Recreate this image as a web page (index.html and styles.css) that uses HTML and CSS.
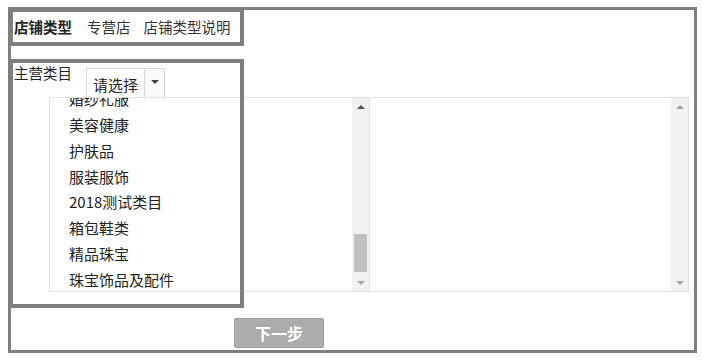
FILE: index.html
```html
<!DOCTYPE html>
<html lang="zh-CN">
<head>
<meta charset="utf-8">
<title>店铺类型</title>
<link rel="stylesheet" href="styles.css">
</head>
<body>
<div class="frame">
  <div class="shop-type">
    <span class="label-strong">店铺类型</span>
    <span class="type-value">专营店</span>
    <span class="type-help">店铺类型说明</span>
  </div>
  <div class="category-row">
    <span class="category-label">主营类目</span>
    <div class="select">
      <span class="select-text">请选择</span>
      <span class="select-arrow"><span class="tri-down dark"></span></span>
    </div>
  </div>
  <div class="panels">
    <div class="panel panel-left">
      <div class="list-viewport">
        <ul class="list">
          <li class="cut">婚纱礼服</li>
          <li>美容健康</li>
          <li>护肤品</li>
          <li>服装服饰</li>
          <li>2018测试类目</li>
          <li>箱包鞋类</li>
          <li>精品珠宝</li>
          <li>珠宝饰品及配件</li>
        </ul>
      </div>
      <div class="scrollbar">
        <span class="sb-btn"><span class="tri-up dark"></span></span>
        <span class="sb-track"><span class="sb-thumb"></span></span>
        <span class="sb-btn"><span class="tri-down light"></span></span>
      </div>
    </div>
    <div class="panel panel-right">
      <div class="list-viewport"></div>
      <div class="scrollbar">
        <span class="sb-btn"><span class="tri-up light"></span></span>
        <span class="sb-track"></span>
        <span class="sb-btn"><span class="tri-down light"></span></span>
      </div>
    </div>
  </div>
  <div class="actions">
    <button class="next-btn" type="button">下一步</button>
  </div>
</div>
<div class="mark mark-type"></div>
<div class="mark mark-category"></div>
</body>
</html>
```
FILE: styles.css
```css
html, body {
  margin: 0;
  padding: 0;
  background: #ffffff;
}
body {
  font-family: "Noto Sans CJK SC", "Noto Sans", sans-serif;
  color: #333333;
  width: 703px;
  height: 360px;
  overflow: hidden;
  position: relative;
}
.frame {
  box-sizing: border-box;
  width: 689px;
  height: 346px;
  margin: 7px 0 0 8px;
  border: 3px solid #7f7f7f;
  display: flex;
  flex-direction: column;
}
.shop-type {
  margin-top: 7px;
  padding-left: 3px;
  display: flex;
  font-size: 14.5px;
  line-height: 20px;
  white-space: nowrap;
}
.label-strong {
  font-weight: bold;
  color: #222;
}
.type-value {
  margin-left: 15px;
}
.type-help {
  margin-left: 13px;
}
.category-row {
  margin-top: 26px;
  padding-left: 3px;
  display: flex;
  align-items: flex-start;
  height: 34px;
}
.category-label {
  font-size: 14.5px;
  line-height: 20px;
  color: #222;
}
.select {
  margin-top: 5px;
  margin-left: 14px;
  box-sizing: border-box;
  height: 29px;
  display: flex;
  border: 1px solid #d6d6d6;
  border-bottom: none;
  background: #fff;
}
.select-text {
  padding: 7px 6px 0 6px;
  font-size: 15px;
  line-height: 18px;
  color: #222;
  border-right: 1px solid #d6d6d6;
}
.select-arrow {
  width: 19px;
  display: flex;
  justify-content: center;
  padding-top: 11px;
  box-sizing: border-box;
  background: #fafafa;
}
.tri-down, .tri-up {
  width: 0;
  height: 0;
  border-left: 4px solid transparent;
  border-right: 4px solid transparent;
}
.tri-down.dark { border-top: 4px solid #444; }
.tri-down.light { border-top: 4px solid #a3a3a3; }
.tri-up.dark { border-bottom: 4px solid #505050; }
.tri-up.light { border-bottom: 4px solid #a3a3a3; }
.panels {
  margin-left: 38px;
  margin-right: 5px;
  height: 195px;
  display: flex;
}
.panel {
  box-sizing: border-box;
  height: 195px;
  display: flex;
  border: 1px solid #e3e3e3;
  background: #fff;
}
.panel-left {
  width: 321px;
}
.panel-right {
  flex: 1;
  border-left: none;
}
.list-viewport {
  flex: 1;
  overflow: hidden;
}
.list {
  list-style: none;
  margin: 0;
  padding: 0 0 0 19px;
  font-size: 15px;
  line-height: 25.8px;
  color: #222;
}
.list li {
  white-space: nowrap;
}
.list li.cut {
  height: 14px;
  line-height: 1px;
  overflow: hidden;
}
.scrollbar {
  width: 17px;
  background: #f1f1f1;
  display: flex;
  flex-direction: column;
}
.sb-btn {
  height: 17px;
  display: flex;
  align-items: center;
  justify-content: center;
}
.sb-track {
  flex: 1;
  display: flex;
  flex-direction: column;
  justify-content: flex-end;
  padding: 0 2px;
}
.sb-thumb {
  height: 38px;
  background: #c1c1c1;
  margin-bottom: 2px;
}
.actions {
  margin-top: 26px;
  padding-left: 223px;
  display: flex;
}
.next-btn {
  box-sizing: border-box;
  width: 90px;
  height: 30px;
  padding: 0;
  border: 1px solid #9a9a9a;
  border-radius: 2px;
  background: #acacac;
  color: #ffffff;
  font-family: "Noto Sans CJK SC", sans-serif;
  font-size: 16px;
  font-weight: bold;
  line-height: 28px;
}
.mark {
  position: absolute;
  box-sizing: border-box;
  border: 4px solid #7f7f7f;
  pointer-events: none;
}
.mark-type {
  left: 9px;
  top: 8px;
  width: 235px;
  height: 38px;
}
.mark-category {
  left: 9px;
  top: 59px;
  width: 235px;
  height: 249px;
}
```
